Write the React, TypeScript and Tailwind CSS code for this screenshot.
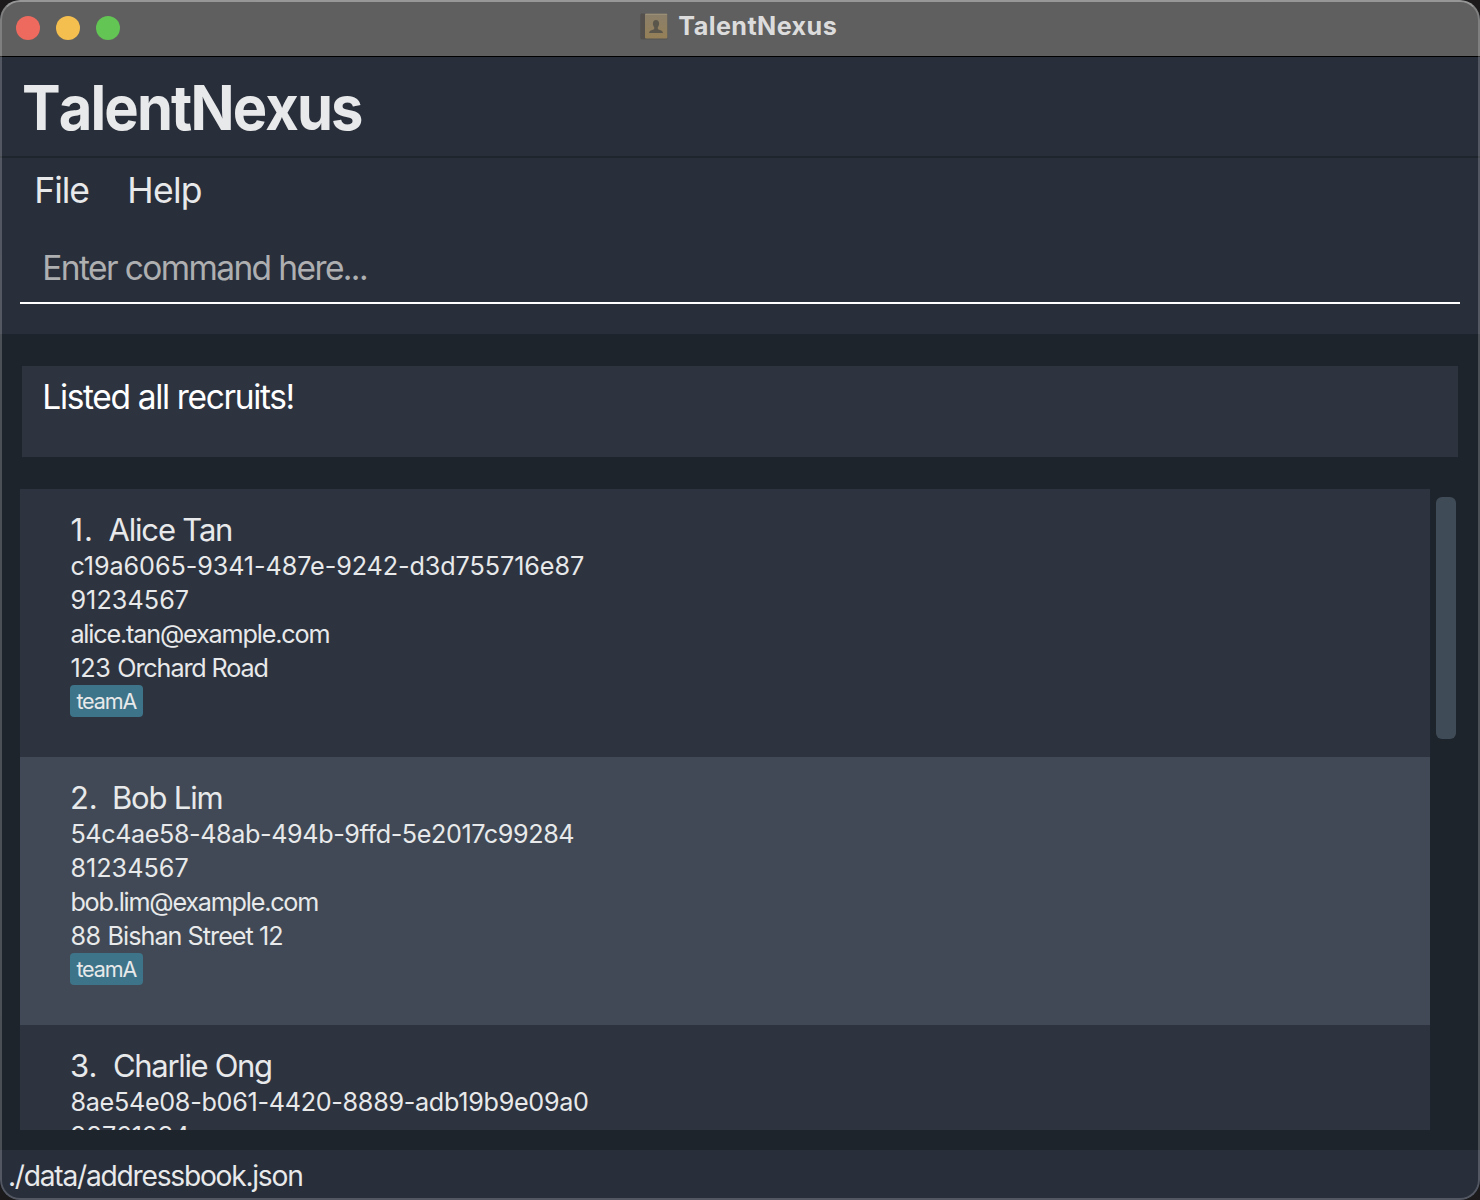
type Recruit = {
  index: string;
  indexClass: string;
  name: string;
  nameClass: string;
  id: string;
  idClass: string;
  phone: string;
  phoneClass: string;
  email?: string;
  emailClass?: string;
  block?: string;
  street?: string;
  streetClass?: string;
  tag?: string;
};

const recruits: Recruit[] = [
  {
    index: "1.",
    indexClass: "w-[38.5px] pl-[0.5px] tracking-[0.9px]",
    name: "Alice Tan",
    nameClass: "tracking-[-1.18px]",
    id: "c19a6065-9341-487e-9242-d3d755716e87",
    idClass: "tracking-[-0.09px]",
    phone: "91234567",
    phoneClass: "tracking-[0.07px]",
    email: "alice.tan@example.com",
    emailClass: "tracking-[-1.17px]",
    block: "123 ",
    street: "Orchard Road",
    streetClass: "tracking-[-1.12px]",
    tag: "teamA",
  },
  {
    index: "2.",
    indexClass: "w-[42px] tracking-[-0.2px]",
    name: "Bob Lim",
    nameClass: "tracking-[-1.18px]",
    id: "54c4ae58-48ab-494b-9ffd-5e2017c99284",
    idClass: "tracking-[-0.41px]",
    phone: "81234567",
    phoneClass: "tracking-[0.01px]",
    email: "bob.lim@example.com",
    emailClass: "tracking-[-1.22px]",
    block: "88 ",
    street: "Bishan Street 12",
    streetClass: "tracking-[-0.98px]",
    tag: "teamA",
  },
  {
    index: "3.",
    indexClass: "w-[43px] tracking-[0.05px]",
    name: "Charlie Ong",
    nameClass: "tracking-[-1.33px]",
    id: "8ae54e08-b061-4420-8889-adb19b9e09a0",
    idClass: "tracking-[-0.3px]",
    phone: "98761234",
    phoneClass: "tracking-[0.16px]",
  },
];

function TitleBar() {
  return (
    <div className="relative flex h-14 shrink-0 items-center justify-center bg-[#5f5f5f]">
      <div className="absolute top-4 left-4 flex gap-4">
        <span className="size-6 rounded-full bg-[#ee6a5f]" />
        <span className="size-6 rounded-full bg-[#f5bf4f]" />
        <span className="size-6 rounded-full bg-[#62c554]" />
      </div>
      <div className="mr-[3px] flex h-[53px] items-center gap-[10.5px] self-start">
        <svg width="28" height="27" viewBox="0 0 28 27" aria-hidden="true">
          <defs>
            <linearGradient id="cover" x1="0" y1="0" x2="0" y2="1">
              <stop offset="0" stopColor="#8b7f6b" />
              <stop offset="1" stopColor="#958057" />
            </linearGradient>
          </defs>
          <rect x="0.5" y="1" width="27" height="25.5" rx="1.5" fill="#555453" />
          <rect x="0.5" y="0.5" width="5" height="25.5" rx="1" fill="#54504d" />
          <rect x="5" y="0.8" width="22.3" height="24.6" rx="0.8" fill="url(#cover)" />
          <path d="M5.3 1.3h21.6" stroke="#a3987f" strokeWidth="0.8" />
          <path
            d="M16 7c-2 0-3.2 1.5-3.1 3.6 0 1.6.5 2.8 1.3 3.6v1.3c0 .6-.5.9-1.3 1.2-1.9.7-3.7 1.2-3.9 3.3h14c-.2-2.1-2-2.6-3.9-3.3-.8-.3-1.3-.6-1.3-1.2v-1.3c.8-.8 1.3-2 1.3-3.6C19.200 8.5 18 7 16 7z"
            fill="#5b564c"
          />
        </svg>
        <span className="text-[25.2px] font-bold tracking-[0.4px] text-[#dcdcdc]">TalentNexus</span>
      </div>
    </div>
  );
}

function RecruitCard({ recruit, striped }: { recruit: Recruit; striped: boolean }) {
  return (
    <li
      className={
        striped
          ? "h-[268px] shrink-0 bg-[#404955] pt-[22px] pl-[50px]"
          : "h-[268px] shrink-0 bg-[#2d333f] pt-[22px] pl-[50px]"
      }
    >
      <div className="flex text-[31px] leading-[38px]">
        <span className={recruit.indexClass}>{recruit.index}</span>
        <span className={recruit.nameClass}>{recruit.name}</span>
      </div>
      <div className="pl-[0.4px] text-[25.2px] leading-[34px]">
        <p className={recruit.idClass}>{recruit.id}</p>
        <p className={recruit.phoneClass}>{recruit.phone}</p>
        {recruit.email && <p className={recruit.emailClass}>{recruit.email}</p>}
        {recruit.street && (
          <p>
            <span className="tracking-[-0.35px]">{recruit.block}</span>
            <span className={recruit.streetClass}>{recruit.street}</span>
          </p>
        )}
      </div>
      {recruit.tag && (
        <span className="flex h-8 w-[73px] rounded-[4px] bg-[#3e7489] pl-[6.4px] text-[21.5px] leading-8 tracking-[-1.1px]">
          {recruit.tag}
        </span>
      )}
    </li>
  );
}

export default function App() {
  return (
    <div className="h-[1200px] w-[1480px] overflow-hidden bg-[#1c1a1b] font-['Inter',sans-serif] whitespace-nowrap text-[#e8e9ea]">
      <div className="relative flex h-full flex-col overflow-hidden rounded-[20px] bg-[#1d242b]">
        <TitleBar />
        <header className="h-[102px] shrink-0 border-t border-b-2 border-t-black border-b-[#1e252d] bg-[#282e3a] pl-[21.5px]">
          <h1 className="origin-left scale-x-[0.94] text-[61.5px] leading-[101px] font-bold tracking-[-1.95px] [font-kerning:none]">
            TalentNexus
          </h1>
        </header>
        <nav className="flex h-16 shrink-0 bg-[#282e3a] pl-[34.3px] text-[35.5px] leading-[66px]">
          <span className="w-[93px] tracking-[-1.05px]">File</span>
          <span className="tracking-[-0.75px]">Help</span>
        </nav>
        <div className="h-28 shrink-0 bg-[#282e3a] px-5 pt-3">
          <div className="h-[70px] border-b-2 border-white pl-[22.3px] text-[33.5px] leading-[68px] tracking-[-1.61px] text-[#aeafb0]">
            Enter command here...
          </div>
        </div>
        <div className="mx-[22px] mt-8 h-[91px] shrink-0 bg-[#2d333f] pl-[20.3px] text-[33.5px] leading-[62px] tracking-[-1.35px] text-white">
          Listed all recruits!
        </div>
        <main className="mt-8 flex h-[641px] shrink-0 gap-1.5 pl-5">
          <ul className="flex w-[1410px] flex-col overflow-hidden">
            {recruits.map((r, i) => (
              <RecruitCard key={r.id} recruit={r} striped={i % 2 === 1} />
            ))}
          </ul>
          <div className="mt-2 h-[242px] w-5 rounded-[6px] bg-[#404b58]" />
        </main>
        <footer className="mt-5 h-[50px] shrink-0 bg-[#282e3a] pl-2 text-[28.2px] leading-[53px] tracking-[-1.25px]">
          ./data/addressbook.json
        </footer>
        <div className="pointer-events-none absolute inset-0 rounded-[20px] border-2 border-white/20 border-t-white/35" />
      </div>
    </div>
  );
}
